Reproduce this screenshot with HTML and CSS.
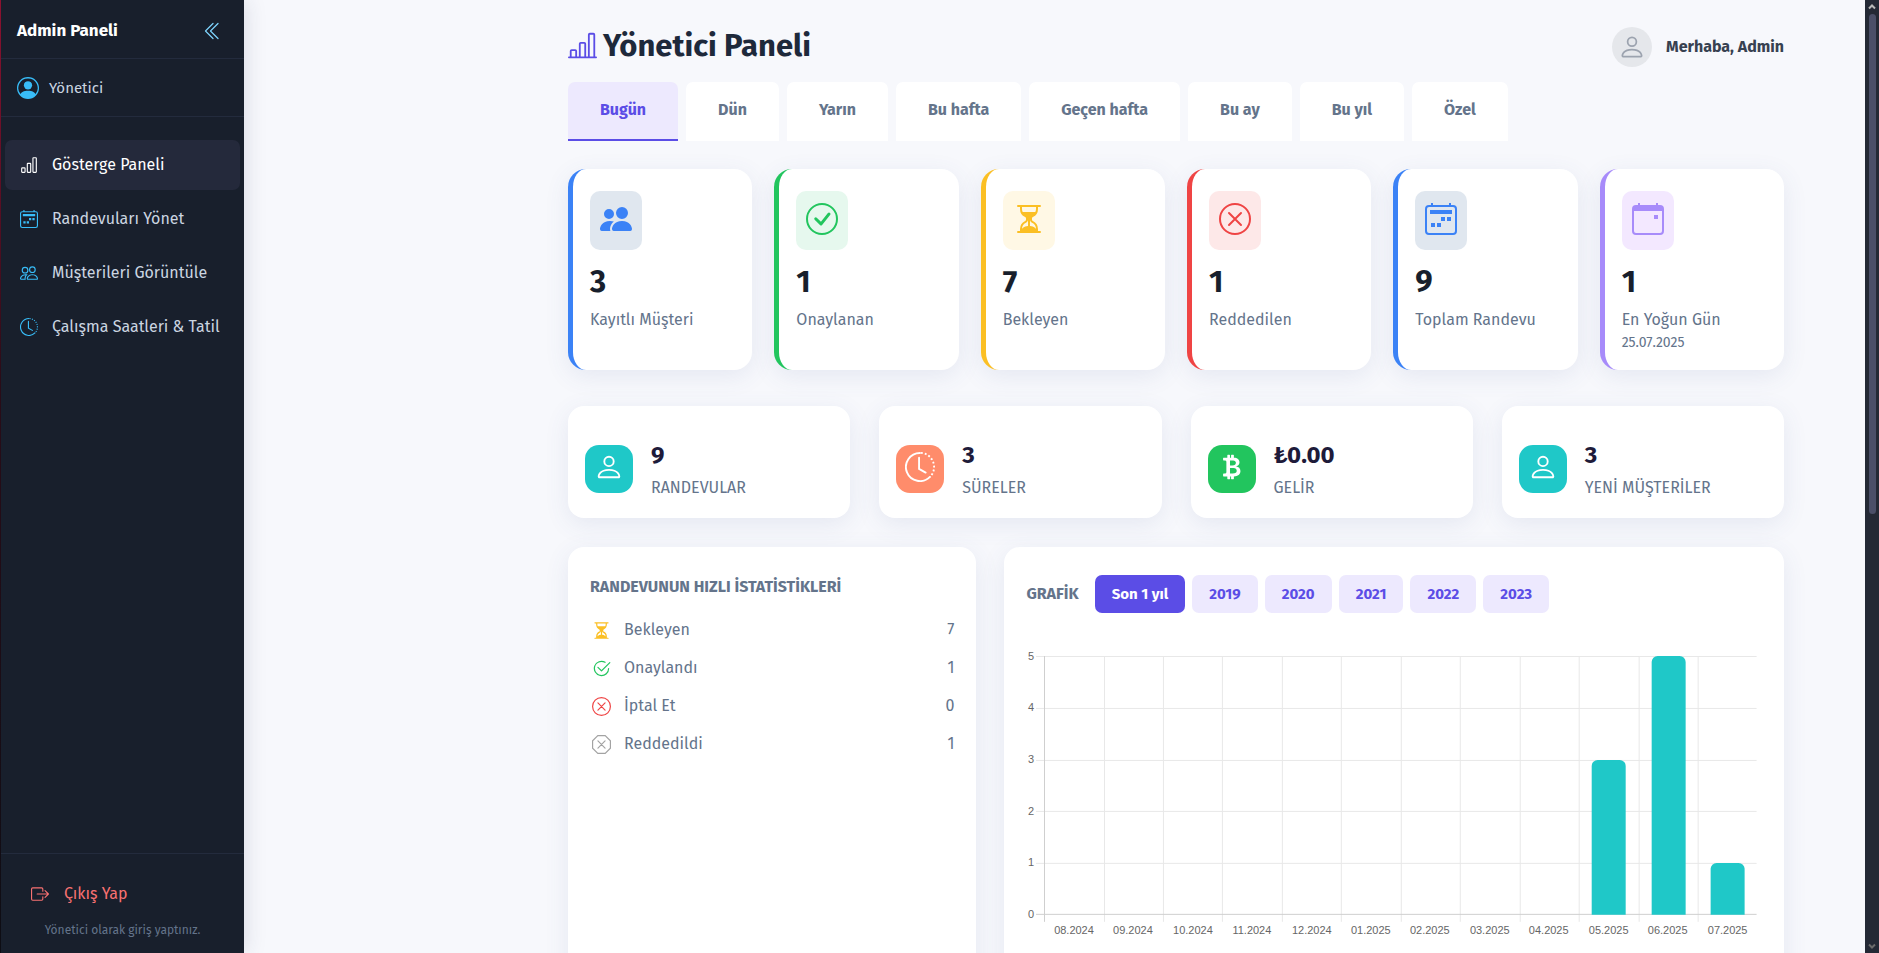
FILE: index.html
```html
<!DOCTYPE html>
<html lang="tr">
<head>
<meta charset="utf-8">
<meta name="viewport" content="width=device-width, initial-scale=1">
<title>Yönetici Paneli</title>
<link rel="stylesheet" href="styles.css">
</head>
<body>
<svg class="sprite" aria-hidden="true">
  <symbol id="bars" viewBox="0 0 16 16"><path d="M4 11H2v3h2zm5-4H7v7h2zm5-5v12h-2V2zm-2-1a1 1 0 0 0-1 1v12a1 1 0 0 0 1 1h2a1 1 0 0 0 1-1V2a1 1 0 0 0-1-1zM6 7a1 1 0 0 1 1-1h2a1 1 0 0 1 1 1v7a1 1 0 0 1-1 1H7a1 1 0 0 1-1-1zm-5 4a1 1 0 0 1 1-1h2a1 1 0 0 1 1 1v3a1 1 0 0 1-1 1H2a1 1 0 0 1-1-1z"/></symbol>
  <symbol id="bars-line" viewBox="0 0 16 16"><path d="M11 2a1 1 0 0 1 1-1h2a1 1 0 0 1 1 1v12h.5a.5.5 0 0 1 0 1H.5a.5.5 0 0 1 0-1H1v-3a1 1 0 0 1 1-1h2a1 1 0 0 1 1 1v3h1V7a1 1 0 0 1 1-1h2a1 1 0 0 1 1 1v7h1zm1 12h2V2h-2zm-3 0V7H7v7zm-5 0v-3H2v3z"/></symbol>
  <symbol id="collapse" viewBox="0 0 16 16"><path d="M8.354 1.646a.5.5 0 0 1 0 .708L2.707 8l5.647 5.646a.5.5 0 0 1-.708.708l-6-6a.5.5 0 0 1 0-.708l6-6a.5.5 0 0 1 .708 0"/><path d="M12.354 1.646a.5.5 0 0 1 0 .708L6.707 8l5.647 5.646a.5.5 0 0 1-.708.708l-6-6a.5.5 0 0 1 0-.708l6-6a.5.5 0 0 1 .708 0"/></symbol>
  <symbol id="person-circle" viewBox="0 0 16 16"><path d="M11 6a3 3 0 1 1-6 0 3 3 0 0 1 6 0"/><path fill-rule="evenodd" d="M0 8a8 8 0 1 1 16 0A8 8 0 0 1 0 8m8-7a7 7 0 0 0-5.468 11.37C3.242 11.226 4.805 10 8 10s4.757 1.225 5.468 2.37A7 7 0 0 0 8 1"/></symbol>
  <symbol id="person" viewBox="0 0 16 16"><path d="M8 8a3 3 0 1 0 0-6 3 3 0 0 0 0 6m2-3a2 2 0 1 1-4 0 2 2 0 0 1 4 0m4 8c0 1-1 1-1 1H3s-1 0-1-1 1-4 6-4 6 3 6 4m-1-.004c-.001-.246-.154-.986-.832-1.664C11.516 10.68 10.289 10 8 10s-3.516.68-4.168 1.332c-.678.678-.83 1.418-.832 1.664z"/></symbol>
  <symbol id="week" viewBox="0 0 16 16"><path d="M3 0h1v1h8V0h1v1h1a2 2 0 0 1 2 2v11a2 2 0 0 1-2 2H2a2 2 0 0 1-2-2V3a2 2 0 0 1 2-2h1zM2 2a1 1 0 0 0-1 1v11a1 1 0 0 0 1 1h12a1 1 0 0 0 1-1V3a1 1 0 0 0-1-1z"/><path d="M2.500 3.500h11v2h-11zM8 7h2v2H8zM11 7h2v2h-2zM3 10h2v2H3zM6 10h2v2H6z"/></symbol>
  <symbol id="event" viewBox="0 0 16 16"><path d="M11 6h2v2h-2z"/><path d="M3 0h1v1h8V0h1v1h1a2 2 0 0 1 2 2v11a2 2 0 0 1-2 2H2a2 2 0 0 1-2-2V3a2 2 0 0 1 2-2h1zM1 4v10a1 1 0 0 0 1 1h12a1 1 0 0 0 1-1V4z"/></symbol>
  <symbol id="people-fill" viewBox="0 0 16 16"><path d="M7 14s-1 0-1-1 1-4 5-4 5 3 5 4-1 1-1 1zm4-6a3 3 0 1 0 0-6 3 3 0 0 0 0 6m-5.784 6A2.240 2.240 0 0 1 5 13c0-1.355.68-2.750 1.936-3.720A6.300 6.300 0 0 0 5 9c-4 0-5 3-5 4s1 1 1 1zM4.500 8a2.500 2.500 0 1 0 0-5 2.500 2.500 0 0 0 0 5"/></symbol>
  <symbol id="people" viewBox="0 0 16 16"><path d="M15 14s1 0 1-1-1-4-5-4-5 3-5 4 1 1 1 1zm-7.978-1L7 12.996c.001-.264.167-1.030.76-1.720C8.312 10.629 9.282 10 11 10c1.717 0 2.687.63 3.240 1.276.593.69.758 1.457.76 1.720l-.008.002-.014.002zM11 7a2 2 0 1 0 0-4 2 2 0 0 0 0 4m3-2a3 3 0 1 1-6 0 3 3 0 0 1 6 0M6.936 9.280a6 6 0 0 0-1.230-.247A7 7 0 0 0 5 9c-4 0-5 3-5 4q0 1 1 1h4.216A2.240 2.240 0 0 1 5 13c0-1.010.377-2.042 1.090-2.904.243-.294.526-.569.846-.816M4.920 10A5.500 5.500 0 0 0 4 13H1c0-.26.164-1.030.76-1.724.545-.636 1.492-1.256 3.160-1.275zM1.500 5.500a3 3 0 1 1 6 0 3 3 0 0 1-6 0m3-2a2 2 0 1 0 0 4 2 2 0 0 0 0-4"/></symbol>
  <symbol id="history" viewBox="0 0 16 16"><g fill="none" stroke="currentColor"><path d="M8 .5a7.500 7.500 0 1 0 5.300 12.800M7.500 3v6l3.500 2" stroke-linecap="round"/><path d="M8.500.5a7.500 7.500 0 0 1 4.800 12.800" stroke-dasharray="1 1.100"/></g></symbol>
  <symbol id="check" viewBox="0 0 16 16"><circle cx="8" cy="8" r="7.500" fill="none" stroke="currentColor"/><path d="M10.970 4.970a.235.235 0 0 0-.02.022L7.477 9.417 5.384 7.323a.75.75 0 0 0-1.060 1.060L6.970 11.030a.75.75 0 0 0 1.079-.02l3.992-4.990a.75.75 0 0 0-1.071-1.050"/></symbol>
  <symbol id="check2" viewBox="0 0 16 16"><path d="M2.500 8a5.500 5.500 0 0 1 8.250-4.764.5.5 0 0 0 .5-.866A6.500 6.500 0 1 0 14.500 8a.5.5 0 0 0-1 0 5.500 5.500 0 1 1-11 0"/><path d="M15.354 3.354a.5.5 0 0 0-.708-.708L8 9.293 5.354 6.646a.5.5 0 1 0-.708.708l3 3a.5.5 0 0 0 .708 0z"/></symbol>
  <symbol id="cross" viewBox="0 0 16 16"><g fill="none" stroke="currentColor" stroke-linecap="round"><circle cx="8" cy="8" r="7.500"/><path d="M5 5l6 6M11 5l-6 6"/></g></symbol>
  <symbol id="octagon" viewBox="0 0 16 16"><g fill="none" stroke="currentColor" stroke-linecap="round"><path d="M4.900.5h6.200l4.400 4.400v6.200l-4.400 4.400H4.900L.5 11.100V4.900zM5 5l6 6M11 5l-6 6"/></g></symbol>
  <symbol id="hourglass" viewBox="0 0 16 16"><path d="M2.500 15a.5.5 0 1 1 0-1h1v-1a4.500 4.500 0 0 1 2.557-4.060c.29-.139.443-.377.443-.59v-.7c0-.213-.154-.451-.443-.59A4.500 4.500 0 0 1 3.500 3V2h-1a.5.5 0 0 1 0-1h11a.5.5 0 0 1 0 1h-1v1a4.500 4.500 0 0 1-2.557 4.060c-.29.139-.443.377-.443.59v.7c0 .213.154.451.443.59A4.500 4.500 0 0 1 12.500 13v1h1a.5.5 0 0 1 0 1zm2-13v1c0 .537.12 1.045.337 1.500h6.326c.216-.455.337-.963.337-1.500V2zm3 6.350c0 .701-.478 1.236-1.011 1.492A3.500 3.500 0 0 0 4.500 13s.866-1.299 3-1.480zm1 0v3.170c2.134.181 3 1.480 3 1.480a3.500 3.500 0 0 0-1.989-3.158C8.978 9.586 8.500 9.052 8.500 8.351z"/></symbol>
  <symbol id="bitcoin" viewBox="0 0 16 16"><path fill-rule="evenodd" d="M5.500 13v1.250c0 .138.112.25.25.25h1a.25.25 0 0 0 .25-.25V13h.5v1.250c0 .138.112.25.25.25h1a.25.25 0 0 0 .25-.25V13h.084c1.992 0 3.416-1.033 3.416-2.820 0-1.502-1.007-2.323-2.186-2.440v-.088c.97-.242 1.683-.974 1.683-2.190C11.997 3.930 10.847 3 9.092 3H9V1.750a.25.25 0 0 0-.25-.25h-1a.25.25 0 0 0-.25.25V3h-.573V1.750a.25.25 0 0 0-.25-.25H5.750a.25.25 0 0 0-.25.25V3l-1.998.011a.25.25 0 0 0-.25.25v.989c0 .137.11.25.248.25l.755-.005a.75.75 0 0 1 .745.75v5.505a.75.75 0 0 1-.75.75l-.748.011a.25.25 0 0 0-.25.25v1c0 .138.112.25.25.25zm1.427-8.513h1.719c.906 0 1.438.498 1.438 1.312 0 .871-.575 1.362-1.877 1.362h-1.280zm0 4.051h1.840c1.137 0 1.756.58 1.756 1.524 0 .953-.626 1.450-2.158 1.450H6.927z"/></symbol>
  <symbol id="exit" viewBox="0 0 16 16"><path d="M10 12.500a.5.5 0 0 1-.5.5h-8a.5.5 0 0 1-.5-.5v-9a.5.5 0 0 1 .5-.5h8a.5.5 0 0 1 .5.5v2a.5.5 0 0 0 1 0v-2A1.500 1.500 0 0 0 9.500 2h-8A1.500 1.500 0 0 0 0 3.500v9A1.500 1.500 0 0 0 1.500 14h8a1.500 1.500 0 0 0 1.500-1.500v-2a.5.5 0 0 0-1 0z"/><path d="M15.854 8.354a.5.5 0 0 0 0-.708l-3-3a.5.5 0 0 0-.708.708L14.293 7.500H5.500a.5.5 0 0 0 0 1h8.793l-2.147 2.146a.5.5 0 0 0 .708.708z"/></symbol>
  <symbol id="arrow-up" viewBox="0 0 8 6"><path d="M1 5l3-3 3 3" fill="none" stroke="currentColor" stroke-width="2"/></symbol>
</svg>

<div class="shell">
  <aside class="sidebar">
    <div class="brand">
      <span>Admin Paneli</span>
      <button class="collapse" type="button" aria-label="Menüyü daralt"><svg><use href="#collapse"/></svg></button>
    </div>
    <div class="role"><svg><use href="#person-circle"/></svg><span>Yönetici</span></div>
    <nav class="nav">
      <a class="nav-item active" href="#"><svg><use href="#bars"/></svg>Gösterge Paneli</a>
      <a class="nav-item" href="#"><svg><use href="#week"/></svg>Randevuları Yönet</a>
      <a class="nav-item" href="#"><svg><use href="#people"/></svg>Müşterileri Görüntüle</a>
      <a class="nav-item" href="#"><svg><use href="#history"/></svg>Çalışma Saatleri &amp; Tatil</a>
    </nav>
    <div class="side-foot">
      <a class="logout" href="#"><svg><use href="#exit"/></svg>Çıkış Yap</a>
      <p class="signed">Yönetici olarak giriş yaptınız.</p>
    </div>
  </aside>

  <main class="main">
    <div class="content">
      <header class="top">
        <h1 class="title"><svg><use href="#bars-line"/></svg>Yönetici Paneli</h1>
        <div class="hello"><span class="avatar"><svg><use href="#person"/></svg></span>Merhaba, Admin</div>
      </header>

      <div class="tabs">
        <button class="tab active" type="button">Bugün</button>
        <button class="tab" type="button">Dün</button>
        <button class="tab" type="button">Yarın</button>
        <button class="tab" type="button">Bu hafta</button>
        <button class="tab" type="button">Geçen hafta</button>
        <button class="tab" type="button">Bu ay</button>
        <button class="tab" type="button">Bu yıl</button>
        <button class="tab" type="button">Özel</button>
      </div>

      <section class="stats">
        <article class="stat blue"><span class="stat-icon"><svg><use href="#people-fill"/></svg></span><strong>3</strong><span>Kayıtlı Müşteri</span></article>
        <article class="stat green"><span class="stat-icon"><svg><use href="#check"/></svg></span><strong>1</strong><span>Onaylanan</span></article>
        <article class="stat yellow"><span class="stat-icon"><svg><use href="#hourglass"/></svg></span><strong>7</strong><span>Bekleyen</span></article>
        <article class="stat red"><span class="stat-icon"><svg><use href="#cross"/></svg></span><strong>1</strong><span>Reddedilen</span></article>
        <article class="stat blue"><span class="stat-icon"><svg><use href="#week"/></svg></span><strong>9</strong><span>Toplam Randevu</span></article>
        <article class="stat violet"><span class="stat-icon"><svg><use href="#event"/></svg></span><strong>1</strong><span>En Yoğun Gün</span><small>25.07.2025</small></article>
      </section>

      <section class="totals">
        <article class="total"><span class="total-icon teal"><svg><use href="#person"/></svg></span><div><strong>9</strong><span>RANDEVULAR</span></div></article>
        <article class="total"><span class="total-icon coral"><svg><use href="#history"/></svg></span><div><strong>3</strong><span>SÜRELER</span></div></article>
        <article class="total"><span class="total-icon lime"><svg><use href="#bitcoin"/></svg></span><div><strong>₺0.00</strong><span>GELİR</span></div></article>
        <article class="total"><span class="total-icon teal"><svg><use href="#person"/></svg></span><div><strong>3</strong><span>YENİ MÜŞTERİLER</span></div></article>
      </section>

      <section class="panels">
        <article class="panel quick">
          <h2>RANDEVUNUN HIZLI İSTATİSTİKLERİ</h2>
          <ul>
            <li><svg class="i-yellow"><use href="#hourglass"/></svg><span>Bekleyen</span><b>7</b></li>
            <li><svg class="i-green"><use href="#check2"/></svg><span>Onaylandı</span><b>1</b></li>
            <li><svg class="i-red"><use href="#cross"/></svg><span>İptal Et</span><b>0</b></li>
            <li><svg class="i-grey"><use href="#octagon"/></svg><span>Reddedildi</span><b>1</b></li>
          </ul>
        </article>
        <article class="panel">
          <div class="chart-head">
            <h2>GRAFİK</h2>
            <button class="year active" type="button">Son 1 yıl</button>
            <button class="year" type="button">2019</button>
            <button class="year" type="button">2020</button>
            <button class="year" type="button">2021</button>
            <button class="year" type="button">2022</button>
            <button class="year" type="button">2023</button>
          </div>
          <svg class="chart" viewBox="0 0 736 310" role="img" aria-label="Aylara göre randevular">
            <path class="grid" d="M10 16.500H731M10 68.500H731M10 120.500H731M10 171.500H731M10 223.500H731M78.500 16v266M137.500 16v266M196.500 16v266M256.500 16v266M315.500 16v266M375.500 16v266M434.500 16v266M494.500 16v266M553.500 16v266M613.500 16v266M672.500 16v266"/>
            <path class="axis" d="M10 274.500H731M18.500 16v266"/>
            <g class="bar">
              <path d="M566 275V126a6 6 0 0 1 6-6h22a6 6 0 0 1 6 6v149z"/>
              <path d="M626 275V22a6 6 0 0 1 6-6h22a6 6 0 0 1 6 6v253z"/>
              <path d="M685 275V229a6 6 0 0 1 6-6h22a6 6 0 0 1 6 6v46z"/>
            </g>
            <g class="tick" text-anchor="end">
              <text x="8" y="20">5</text><text x="8" y="71">4</text><text x="8" y="123">3</text><text x="8" y="175">2</text><text x="8" y="226">1</text><text x="8" y="278">0</text>
            </g>
            <g class="tick" text-anchor="middle">
              <text x="48" y="294">08.2024</text><text x="107" y="294">09.2024</text><text x="167" y="294">10.2024</text><text x="226" y="294">11.2024</text><text x="286" y="294">12.2024</text><text x="345" y="294">01.2025</text><text x="404" y="294">02.2025</text><text x="464" y="294">03.2025</text><text x="523" y="294">04.2025</text><text x="583" y="294">05.2025</text><text x="642" y="294">06.2025</text><text x="702" y="294">07.2025</text>
            </g>
          </svg>
        </article>
      </section>
    </div>
  </main>

  <div class="scrollbar" aria-hidden="true">
    <svg><use href="#arrow-up"/></svg>
    <div class="track"><div class="thumb"></div></div>
    <svg class="down"><use href="#arrow-up"/></svg>
  </div>
</div>
</body>
</html>
```
FILE: styles.css
```css
* { box-sizing: border-box; }
body {
  margin: 0;
  font-family: "Fira Sans", Roboto, "Noto Sans", sans-serif;
  font-size: 16px;
  line-height: 24px;
  background: #f7f8fc;
  color: #64748b;
}
h1, h2, p, ul { margin: 0; padding: 0; }
svg { display: block; fill: currentColor; flex: none; }
button { font: inherit; border: 0; background: none; cursor: pointer; }
a { color: inherit; text-decoration: none; }
.sprite { position: absolute; width: 0; height: 0; }

.shell { display: flex; height: 100vh; overflow: hidden; }

/* Sidebar */
.sidebar {
  display: flex;
  flex-direction: column;
  flex: none;
  width: 244px;
  background: #181f2c;
  color: #cbd5e1;
  border-left: 1px solid;
  border-image: linear-gradient(#8d1230, #2a0c18 40%, #0d0d14) 1;
  box-shadow: 2px 0 20px rgba(40, 50, 90, 0.13);
}
.brand {
  display: flex;
  justify-content: space-between;
  align-items: center;
  height: 59px;
  padding: 3px 21px 0 16px;
  border-bottom: 1px solid #232b3d;
  color: #fff;
  font-weight: 700;
}
.brand span { font-size: 17px; }
.collapse { padding: 0; color: #7dd3fc; }
.collapse svg { width: 20px; height: 20px; }
.role {
  display: flex;
  align-items: center;
  gap: 10px;
  height: 58px;
  padding: 1px 16px 0;
  border-bottom: 1px solid #232b3d;
  font-size: 15px;
}
.role svg { width: 22px; height: 22px; color: #38bdf8; }
.nav {
  display: flex;
  flex-direction: column;
  gap: 4px;
  flex: 1;
  padding: 23px 4px;
}
.nav-item {
  display: flex;
  align-items: center;
  gap: 14px;
  height: 50px;
  padding: 0 15px;
  border-radius: 7px;
  white-space: nowrap;
}
.nav-item svg { width: 18px; height: 18px; color: #38bdf8; }
.nav-item.active, .nav-item.active svg { color: #fff; }
.nav-item.active { background: #24293b; }
.side-foot {
  padding: 28px 30px 11px;
  border-top: 1px solid #232b3d;
}
.logout { display: flex; align-items: center; gap: 15px; color: #f87171; }
.logout svg { width: 18px; height: 18px; }
.signed { padding-top: 12px; font-size: 12px; color: #64748b; text-align: center; white-space: nowrap; }

/* Main column */
.main { flex: 1; min-width: 0; padding: 26px 20px 0 263px; }
.content { max-width: 1216px; margin: 0 auto; }
.top { display: flex; justify-content: space-between; align-items: center; height: 42px; }
.title {
  display: flex;
  align-items: center;
  gap: 6px;
  padding-bottom: 3px;
  font-size: 31px;
  line-height: 40px;
  color: #1e293b;
}
.title svg { width: 29px; height: 29px; color: #5b4de6; }
.hello { display: flex; align-items: center; gap: 14px; font-weight: 700; color: #374151; }
.avatar {
  display: grid;
  place-items: center;
  width: 40px;
  height: 40px;
  border-radius: 50%;
  background: #e5e7eb;
  color: #9ca3af;
}
.avatar svg { width: 28px; height: 28px; }

.tabs { display: flex; gap: 8px; padding-top: 14px; }
.tab {
  height: 59px;
  padding: 0 32px 2px;
  border-bottom: 2px solid transparent;
  border-radius: 7px 7px 0 0;
  background: #fff;
  color: #64748b;
  font-weight: 700;
}
.tab.active { background: #ede9fe; border-color: #5b4de6; color: #5b4de6; }

.stats { display: grid; grid-template-columns: repeat(6, 1fr); gap: 22px; padding-top: 28px; }
.stat, .total, .panel { background: #fff; box-shadow: 0 6px 24px rgba(70, 85, 150, 0.1); }
.stat {
  display: flex;
  flex-direction: column;
  align-items: flex-start;
  min-height: 201px;
  padding: 22px 17px 16px;
  border-left: 5px solid;
  border-radius: 18px;
}
.stat-icon { padding: 12px 10px 15px; border-radius: 10px; }
.stat-icon svg { width: 32px; height: 32px; }
.stat strong { padding: 12px 0 10px; font-size: 31px; line-height: 40px; color: #181f2c; }
.stat span, .stat small { color: #64748b; line-height: 16px; }
.stat small { padding-top: 7px; font-size: 14px; }
.stat.blue { border-color: #3b82f6; }
.stat.blue .stat-icon { background: #e0e7ef; color: #3b82f6; }
.stat.green { border-color: #22c55e; }
.stat.green .stat-icon { background: #e6f8ee; color: #22c55e; }
.stat.yellow { border-color: #fbbf24; }
.stat.yellow .stat-icon { background: #fff8e5; color: #fbbf24; }
.stat.red { border-color: #ef4444; }
.stat.red .stat-icon { background: #fde8e8; color: #ef4444; }
.stat.violet { border-color: #a78bfa; }
.stat.violet .stat-icon { background: #f3e8ff; color: #a78bfa; }

.totals { display: grid; grid-template-columns: repeat(4, 1fr); gap: 29px; padding-top: 36px; }
.total {
  display: flex;
  align-items: center;
  gap: 18px;
  padding: 30px 17px 16px;
  border-radius: 16px;
}
.total-icon { padding: 7px 9px 11px; border-radius: 14px; color: #fff; }
.total-icon svg { width: 30px; height: 30px; }
.total-icon.teal { background: #1fc8c8; }
.total-icon.coral { background: #ff8c6b; }
.total-icon.lime { background: #22c55e; }
.total strong, .total div span { display: block; }
.total strong { font-size: 24px; line-height: 38px; color: #1e1b3a; }
.total div span { line-height: 28px; }

.panels { display: grid; grid-template-columns: 11fr 21fr; gap: 28px; padding-top: 29px; }
.panel { min-height: 440px; padding: 28px 22px; border-radius: 16px; }
.panel h2 { font-size: 16px; line-height: 24px; font-weight: 700; }
.quick ul { list-style: none; padding-top: 12px; }
.quick li { display: flex; align-items: center; gap: 13px; height: 38px; padding-left: 2px; }
.quick li span { flex: 1; }
.quick li b { font-weight: 400; }
.quick li svg { width: 19px; height: 19px; }
.i-yellow { color: #fbbf24; }
.i-green { color: #22c55e; }
.i-red { color: #ef4444; }
.i-grey { color: #a3a3a3; }

.chart-head { display: flex; align-items: center; gap: 7px; }
.chart-head h2 { padding-right: 9px; }
.year {
  height: 38px;
  padding: 0 17px;
  border-radius: 7px;
  background: #ede9fe;
  color: #5b4de6;
  font-size: 15px;
  font-weight: 700;
}
.year.active { background: #5b4de6; color: #fff; }
.chart { width: 100%; height: auto; margin-top: 27px; }
.grid { stroke: #e8e8e8; fill: none; }
.axis { stroke: #cfcfcf; fill: none; }
.bar { fill: #1fc8c8; }
.tick { font-family: "Liberation Sans", Arial, sans-serif; font-size: 11px; fill: #666; }

/* Scrollbar */
.scrollbar {
  display: flex;
  flex-direction: column;
  align-items: center;
  flex: none;
  gap: 4px;
  width: 14px;
  padding: 3px 0;
  background: #242935;
  color: #b8b8b8;
}
.scrollbar svg { width: 8px; height: 7px; }
.scrollbar .down { transform: rotate(180deg); color: #6b6b6b; }
.track { flex: 1; width: 7px; }
.thumb { height: 54%; border-radius: 4px; background: #4b4f68; }
```
